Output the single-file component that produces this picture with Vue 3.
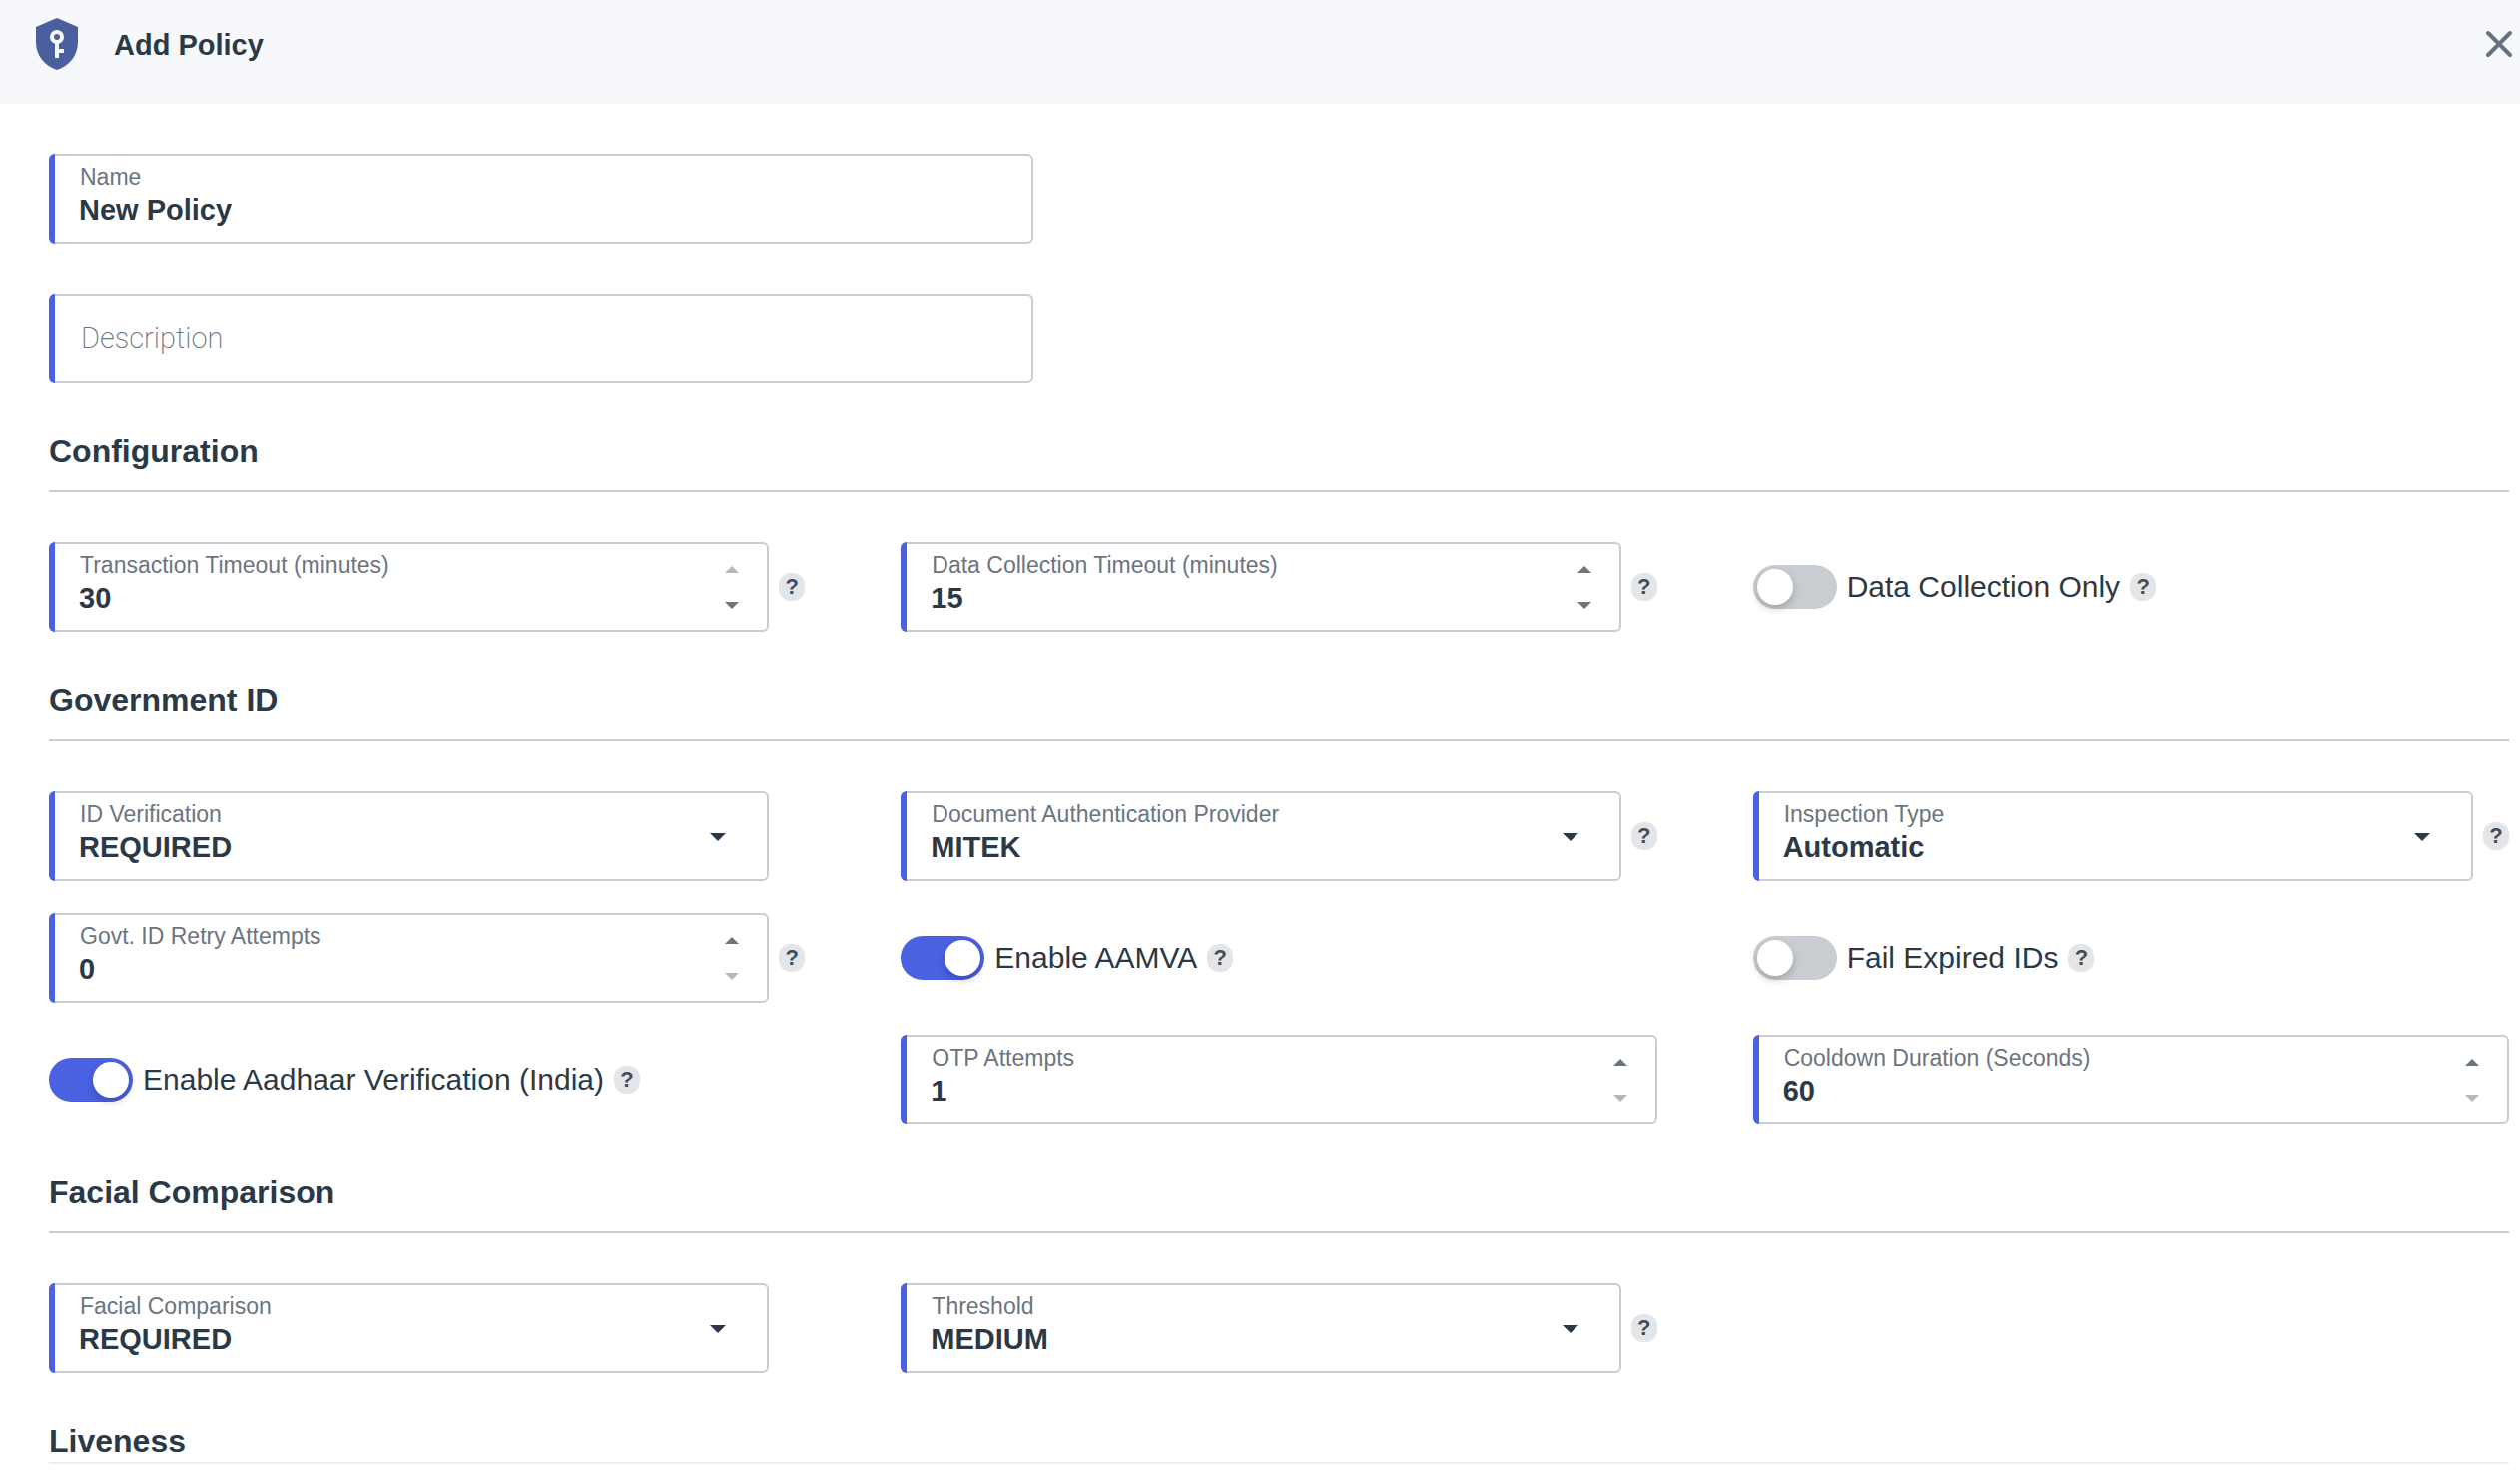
<template>
  <form class="policy" @submit.prevent>
    <header class="policy-header">
      <svg class="policy-icon" viewBox="0 0 42 52" aria-hidden="true">
        <path d="M21 0 L42 9 V24 C42 38 33 48 21 52 C9 48 0 38 0 24 V9 Z" fill="#4a5f9e" />
        <circle cx="21" cy="19" r="5" fill="none" stroke="#f7f8fc" stroke-width="4" />
        <path d="M19 24 H23 V31 H28 V35 H23 V40 H19 Z" fill="#f7f8fc" />
      </svg>
      <h1 class="policy-title">Add Policy</h1>
      <button type="button" class="policy-close" aria-label="Close">
        <svg viewBox="0 0 28 28" aria-hidden="true">
          <path d="M3 3 L25 25 M25 3 L3 25" stroke="#66727f" stroke-width="4" stroke-linecap="round" />
        </svg>
      </button>
    </header>

    <main class="policy-body">
      <div class="basics">
        <div class="field">
          <label class="field-label" for="name">Name</label>
          <input id="name" v-model="name" class="field-control" type="text" />
        </div>
        <div class="field">
          <input
            id="description"
            v-model="description"
            class="field-control field-control-plain"
            type="text"
            placeholder="Description"
            aria-label="Description"
          />
        </div>
      </div>

      <section v-for="section in sections" :key="section.title" class="section">
        <h2 class="section-title">{{ section.title }}</h2>
        <div class="section-grid">
          <div v-for="item in section.items" :key="item.id" class="cell">
            <template v-if="item.type === 'toggle'">
              <label class="toggle">
                <input v-model="item.value" class="toggle-input" type="checkbox" role="switch" />
                <span>{{ item.label }}</span>
              </label>
            </template>

            <div v-else class="field">
              <label class="field-label" :for="item.id">{{ item.label }}</label>
              <template v-if="item.type === 'select'">
                <select :id="item.id" v-model="item.value" class="field-control">
                  <option v-for="option in item.options" :key="option">{{ option }}</option>
                </select>
                <svg class="select-arrow" viewBox="0 0 16 8" aria-hidden="true">
                  <path d="M0 0 H16 L8 8 Z" fill="currentColor" />
                </svg>
              </template>
              <template v-else>
                <input
                  :id="item.id"
                  v-model.number="item.value"
                  class="field-control"
                  type="number"
                  :min="item.min"
                  :max="item.max"
                />
                <div class="stepper">
                  <button
                    type="button"
                    class="stepper-button"
                    :aria-label="'Increase ' + item.label"
                    :disabled="item.value >= item.max"
                    @click="item.value++"
                  >
                    <svg viewBox="0 0 14 7" aria-hidden="true"><path d="M0 7 H14 L7 0 Z" fill="currentColor" /></svg>
                  </button>
                  <button
                    type="button"
                    class="stepper-button"
                    :aria-label="'Decrease ' + item.label"
                    :disabled="item.value <= item.min"
                    @click="item.value--"
                  >
                    <svg viewBox="0 0 14 7" aria-hidden="true"><path d="M0 0 H14 L7 7 Z" fill="currentColor" /></svg>
                  </button>
                </div>
              </template>
            </div>

            <button v-if="item.help" type="button" class="help" :aria-label="'Help: ' + item.label">?</button>
            <span v-else-if="item.type === 'select'" class="help-space"></span>
          </div>
        </div>
      </section>
    </main>

    <footer class="policy-footer"></footer>
  </form>
</template>

<script setup>
import { ref, reactive } from 'vue';

const name = ref('New Policy');
const description = ref('');

const requirement = ['REQUIRED', 'OPTIONAL', 'DISABLED'];

const sections = reactive([
  {
    title: 'Configuration',
    items: [
      { id: 'transaction-timeout', type: 'number', label: 'Transaction Timeout (minutes)', value: 30, min: 1, max: 30, help: true },
      { id: 'collection-timeout', type: 'number', label: 'Data Collection Timeout (minutes)', value: 15, min: 1, max: 30, help: true },
      { id: 'collection-only', type: 'toggle', label: 'Data Collection Only', value: false, help: true }
    ]
  },
  {
    title: 'Government ID',
    items: [
      { id: 'id-verification', type: 'select', label: 'ID Verification', value: 'REQUIRED', options: requirement },
      { id: 'provider', type: 'select', label: 'Document Authentication Provider', value: 'MITEK', options: ['MITEK'], help: true },
      { id: 'inspection-type', type: 'select', label: 'Inspection Type', value: 'Automatic', options: ['Automatic', 'Manual'], help: true },
      { id: 'retry-attempts', type: 'number', label: 'Govt. ID Retry Attempts', value: 0, min: 0, max: 5, help: true },
      { id: 'aamva', type: 'toggle', label: 'Enable AAMVA', value: true, help: true },
      { id: 'fail-expired', type: 'toggle', label: 'Fail Expired IDs', value: false, help: true },
      { id: 'aadhaar', type: 'toggle', label: 'Enable Aadhaar Verification (India)', value: true, help: true },
      { id: 'otp-attempts', type: 'number', label: 'OTP Attempts', value: 1, min: 1, max: 5 },
      { id: 'cooldown', type: 'number', label: 'Cooldown Duration (Seconds)', value: 60, min: 60, max: 600 }
    ]
  },
  {
    title: 'Facial Comparison',
    items: [
      { id: 'facial-comparison', type: 'select', label: 'Facial Comparison', value: 'REQUIRED', options: requirement },
      { id: 'threshold', type: 'select', label: 'Threshold', value: 'MEDIUM', options: ['LOW', 'MEDIUM', 'HIGH'], help: true }
    ]
  },
  { title: 'Liveness', items: [] }
]);
</script>

<style>
body {
  margin: 0;
  background: #ffffff;
}
</style>

<style scoped>
.policy {
  --ink: #2b3947;
  --muted: #6b7580;
  --line: #c9cdd2;
  --accent: #4a61e2;
  display: flex;
  flex-direction: column;
  height: 100vh;
  color: var(--ink);
  font-family: "Helvetica Neue", "Liberation Sans", Arial, sans-serif;
  font-size: 30px;
}

.policy *,
.policy *::before {
  box-sizing: border-box;
}

.policy-header {
  display: flex;
  flex: none;
  align-items: flex-start;
  height: 104px;
  padding: 18px 6px 0 36px;
  background: #f7f8fc;
}

.policy-icon {
  width: 42px;
  height: 52px;
}

.policy-title {
  flex: 1;
  margin: 0 0 0 36px;
  font-size: 29px;
  font-weight: 700;
  line-height: 54px;
}

.policy-close {
  width: 30px;
  height: 52px;
  padding: 1px;
  border: 0;
  background: none;
  cursor: pointer;
}

.policy-close svg {
  display: block;
  width: 28px;
  height: 28px;
}

.policy-body {
  flex: 1;
  min-height: 0;
  padding: 50px 11px 0 49px;
  overflow: hidden;
}

.basics {
  display: grid;
  gap: 50px;
  width: 40%;
}

.section-title {
  margin: 0 0 50px;
  padding: 48px 0 19px;
  border-bottom: 2px solid var(--line);
  font-size: 32px;
  font-weight: 700;
  line-height: 40px;
}

.section-grid {
  display: grid;
  grid-template-columns: repeat(3, minmax(0, 1fr));
  gap: 32px 96px;
}

.cell {
  display: flex;
  align-items: center;
  gap: 10px;
  min-height: 90px;
}

.field {
  position: relative;
  flex: 1;
  min-width: 0;
  height: 90px;
}

.field::before {
  content: "";
  position: absolute;
  top: 0;
  bottom: 0;
  left: 0;
  width: 6px;
  border-radius: 6px 0 0 6px;
  background: var(--accent);
}

.field-label {
  position: absolute;
  top: 10px;
  left: 31px;
  color: var(--muted);
  font-size: 23px;
  line-height: 26px;
  pointer-events: none;
}

.field-control {
  display: block;
  width: 100%;
  height: 100%;
  margin: 0;
  padding: 36px 80px 14px 28px;
  border: 2px solid var(--line);
  border-radius: 6px;
  outline: none;
  appearance: none;
  background: #ffffff;
  color: var(--ink);
  font: inherit;
  font-size: 29px;
  font-weight: 700;
  line-height: 36px;
}

.field-control:focus {
  border-color: var(--accent);
}

.field-control-plain {
  padding-top: 24px;
  padding-bottom: 26px;
  padding-left: 30px;
}

.field-control::placeholder {
  color: var(--muted);
  font-family: Roboto, sans-serif;
  font-size: 29px;
  font-weight: 200;
  opacity: 1;
}

.field-control[type="number"] {
  appearance: textfield;
}

.field-control::-webkit-inner-spin-button {
  appearance: none;
  margin: 0;
}

.select-arrow {
  position: absolute;
  top: 42px;
  right: 43px;
  width: 16px;
  height: 8px;
  pointer-events: none;
}

.stepper {
  position: absolute;
  top: 10px;
  right: 22px;
  display: grid;
  gap: 8px;
}

.stepper-button {
  display: grid;
  place-items: center;
  width: 30px;
  height: 28px;
  padding: 6px 0 0;
  border: 0;
  background: none;
  color: var(--muted);
  cursor: pointer;
}

.stepper-button:disabled {
  color: #b2b8bd;
  cursor: default;
}

.stepper-button svg {
  width: 14px;
  height: 7px;
}

.toggle {
  display: flex;
  align-items: center;
  gap: 10px;
  cursor: pointer;
}

.toggle-input {
  flex: none;
  width: 84px;
  height: 44px;
  margin: 0;
  padding: 4px;
  border-radius: 22px;
  appearance: none;
  background: #c9cdd2;
  cursor: pointer;
}

.toggle-input::before {
  content: "";
  display: block;
  width: 36px;
  height: 36px;
  border-radius: 50%;
  background: #ffffff;
  box-shadow: 0 4px 8px rgba(0, 0, 0, 0.2);
}

.toggle-input:checked {
  background: var(--accent);
}

.toggle-input:checked::before {
  margin-left: auto;
}

.help,
.help-space {
  flex: none;
  width: 26px;
}

.help {
  height: 28px;
  padding: 0;
  border: 0;
  border-radius: 12px;
  background: #e4e5e9;
  color: #414d5a;
  font: 700 22px/28px "Liberation Sans", Arial, sans-serif;
  cursor: pointer;
}

.policy-footer {
  flex: none;
  height: 8px;
  margin: 0 11px 0 49px;
  border-top: 2px solid #f0f0f1;
}
</style>
